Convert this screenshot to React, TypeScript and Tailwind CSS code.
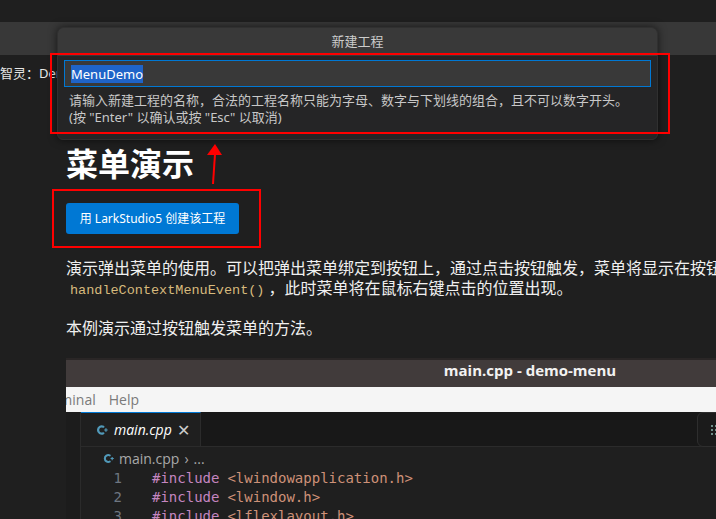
const cjk = "font-['Noto_Sans','Noto_Sans_CJK_SC',sans-serif]";

const CppIcon = ({ className = "" }: { className?: string }) => (
  <svg viewBox="0 0 16 16" className={className} fill="none">
    <path d="M9.5 4.2A4.2 4.2 0 1 0 9.5 11.8" stroke="#519aba" strokeWidth="2.6" strokeLinecap="round" />
    <path d="M10.5 8h4M12.5 6v4" stroke="#519aba" strokeWidth="1.4" />
  </svg>
);

const codeLines = [
  ["#include", "<lwindowapplication.h>"],
  ["#include", "<lwindow.h>"],
  ["#include", "<lflexlayout.h>"],
];

const CodeShot = () => {
  return (
    <div className="w-[928px] border-t-2 border-[#2a2626]">
      <div className="h-[27px] bg-[#413b3b] flex items-center justify-center pb-[6px] font-['Open_Sans',sans-serif] text-[15px] font-bold text-[#f2f2f2]">
        main.cpp - demo-menu
      </div>
      <div className="h-[25px] bg-[#f5f5f5] flex items-center gap-[13px] font-['Open_Sans',sans-serif] text-[14px] text-[#7a7a7a] ml-[-28px]">
        <span>Terminal</span>
        <span>Help</span>
      </div>
      <div className="flex bg-[#1f1f1f] h-[120px]">
        <div className="w-[15px] bg-[#1c1c1c] border-r border-[#2b2b2b]" />
        <div className="flex-1">
          <div className="h-[35px] bg-[#181818] border-b border-[#2b2b2b] flex">
            <div className="w-[120px] bg-[#1f1f1f] border-t border-[#0078d4] border-r border-r-[#2b2b2b] flex items-center pl-[14px] pr-[10px] font-['Open_Sans',sans-serif] text-[14px] text-white">
              <CppIcon className="w-[14px] h-[14px]" />
              <span className="italic ml-[5px]">main.cpp</span>
              <span className="ml-auto text-[#cccccc] text-[16px] leading-none">✕</span>
            </div>
            <div className="ml-[496px] w-[40px] h-[35px] rounded-l-[6px] border border-[#2e2e2e] bg-[#1b1b1b] flex items-center pl-[13px]">
              <div className="grid grid-cols-2 gap-[2px]">
                {[0, 1, 2, 3, 4, 5].map((i) => (
                  <span key={i} className="w-[2px] h-[2px] bg-[#6f8f8a]" />
                ))}
              </div>
            </div>
          </div>
          <div className="h-[22px] flex items-center pl-[21px] font-['Open_Sans',sans-serif] text-[14px] text-[#a9a9a9]">
            <CppIcon className="w-[13px] h-[13px]" />
            <span className="ml-[4px]">main.cpp</span>
            <span className="ml-[5px]">›</span>
            <span className="ml-[5px]">...</span>
          </div>
          {codeLines.map(([kw, rest], i) => (
            <div key={i} className="h-[19px] flex items-center font-['DejaVu_Sans_Mono',monospace] text-[14px]">
              <span className="w-[41px] text-right text-[#6e7681]">{i + 1}</span>
              <span className="ml-[30px] text-[#c586c0]">{kw}</span>
              <span className="ml-[8px] text-[#ce9178]">{rest}</span>
            </div>
          ))}
        </div>
      </div>
    </div>
  );
};

export default function App() {
  return (
    <div className={`relative w-[716px] h-[519px] overflow-hidden bg-[#1f1f1f] text-[#e0e0e0] ${cjk}`}>
      <div className="h-[22px] bg-[#1f1f1f]" />
      <div className="h-[33px] bg-[#383838]" />

      <div className="mt-[9px] h-[18px] text-[13px] leading-[18px] whitespace-nowrap text-[#e8e8e8]">
        智灵：Demo
      </div>

      <div className="pl-[66px]">
        <h1 className="mt-[62px] h-[40px] text-[32px] leading-[40px] font-bold text-white">菜单演示</h1>

        <button className="mt-[19px] h-[31px] w-[173px] rounded-[3px] bg-[#0078d4] text-[12px] text-white whitespace-nowrap">
          用 LarkStudio5 创建该工程
        </button>

        <div className="mt-[24px] text-[16px] leading-[20px] text-[#f0f0f0] whitespace-nowrap">
          <p className="h-[20px]">演示弹出菜单的使用。可以把弹出菜单绑定到按钮上，通过点击按钮触发，菜单将显示在按钮下方。</p>
          <p className="h-[20px]">
            <code className="font-['Liberation_Mono',monospace] text-[13.5px] leading-[20px] text-[#d7ba7d] px-[4px]">
              handleContextMenuEvent()
            </code>
            ，此时菜单将在鼠标右键点击的位置出现。
          </p>
          <p className="mt-[20px] h-[20px]">本例演示通过按钮触发菜单的方法。</p>
        </div>

        <div className="mt-[20px] overflow-hidden">
          <CodeShot />
        </div>
      </div>

      {/* quick input dialog */}
      <div className="absolute left-[57px] top-[27px] w-[601px] h-[113px] rounded-[6px] bg-[#252526] shadow-[0_0_8px_rgba(0,0,0,0.6)] border border-[#303030] overflow-hidden">
        <div className="h-[28px] bg-[#393939] flex items-center justify-center text-[13px] text-[#cccccc]">
          新建工程
        </div>
        <div className="px-[6px] pt-[4px]">
          <div className="h-[27px] bg-[#393939] border border-[#0078d4] flex items-center px-[6px] text-[13px]">
            <span className="bg-[#1f64c8] text-white leading-[18px]">MenuDemo</span>
          </div>
          <div className="mt-[5px] pl-[5px] text-[13px] leading-[17px] text-[#c8c8c8]">
            <p>请输入新建工程的名称，合法的工程名称只能为字母、数字与下划线的组合，且不可以数字开头。</p>
            <p>(按 "Enter" 以确认或按 "Esc" 以取消)</p>
          </div>
        </div>
      </div>

      {/* annotations */}
      <div className="absolute left-[50px] top-[53px] w-[620px] h-[81px] border-2 border-[#ff0000]" />
      <div className="absolute left-[52px] top-[189px] w-[209px] h-[59px] border-2 border-[#ff0000]" />
      <svg className="absolute left-[200px] top-[140px] w-[30px] h-[48px]" viewBox="0 0 30 48">
        <path d="M13 44 L15 14" stroke="#ff0000" strokeWidth="2" />
        <path d="M15 4 L22 15 L7 15 Z" fill="#ff0000" />
      </svg>
    </div>
  );
}
